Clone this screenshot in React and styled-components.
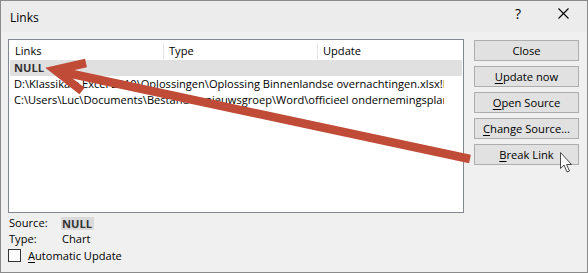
import React from "react";
import styled, { createGlobalStyle } from "styled-components";

const Global = createGlobalStyle`
  html, body { margin: 0; padding: 0; background: #f0f0f0; }
  * { box-sizing: border-box; }
`;

const Dialog = styled.div`
  position: relative;
  width: 588px;
  height: 273px;
  border: 1px solid #8a8a8a;
  background: #f0f0f0;
  display: flex;
  flex-direction: column;
  font-family: "Open Sans", "Noto Sans", sans-serif;
  font-size: 11.1px;
  color: #000;
  overflow: hidden;
`;

const TitleBar = styled.div`
  height: 31px;
  background: #ececec;
  display: flex;
  align-items: center;
  padding: 0 18px 0 9px;
  font-size: 12px;
`;

const Title = styled.div`
  flex: 1;
  margin-top: 1px;
`;

const HelpGlyph = styled.div`
  font-size: 14px;
  margin-top: -6px;
  margin-right: 37px;
`;

const CloseGlyph = styled.svg`
  margin-top: -6px;
  flex-shrink: 0;
`;

const Content = styled.div`
  display: flex;
  padding: 7px 0 0 7px;
`;

const LeftCol = styled.div`
  width: 456px;
  display: flex;
  flex-direction: column;
`;

const ListBox = styled.div`
  height: 174px;
  border: 1px solid #828790;
  background: #fff;
  padding: 0 1px;
`;

const Header = styled.div`
  display: flex;
  height: 20px;
  align-items: center;
  padding-top: 1px;
`;

const HeaderCell = styled.div`
  width: ${(p) => p.$w}px;
  padding-left: 5px;
  height: 16px;
  line-height: 16px;
  border-right: ${(p) => (p.$last ? "none" : "1px solid #e5e5e5")};
`;

const Row = styled.div`
  height: 16px;
  line-height: 16px;
  padding: 0 18px 0 4px;
  background: ${(p) => (p.$selected ? "#e0e0e0" : "transparent")};
  font-weight: ${(p) => (p.$bold ? 700 : 400)};
  color: ${(p) => (p.$bold ? "#333" : "#000")};
  white-space: nowrap;
  overflow: hidden;
`;

const RowText = styled.div`
  overflow: hidden;
  white-space: nowrap;
`;

const InfoRow = styled.div`
  display: flex;
  height: 16px;
  line-height: 16px;
  padding-left: 1px;
  margin-top: ${(p) => p.$mt || 0}px;
`;

const InfoLabel = styled.div`
  width: 53px;
`;

const Highlight = styled.span`
  background: #dadada;
  font-weight: 700;
  color: #333;
  padding: 0 2px 0 1px;
  margin-left: -1px;
  height: 13px;
  line-height: 13px;
  align-self: center;
  margin-top: 1px;
`;

const CheckRow = styled.label`
  display: flex;
  align-items: center;
  gap: 7px;
  margin-top: 2px;
  height: 13px;
`;

const CheckBox = styled.span`
  width: 13px;
  height: 13px;
  border: 1px solid #333;
  background: #fff;
`;

const U = styled.span`
  text-decoration: underline;
  text-underline-offset: 2px;
`;

const ButtonCol = styled.div`
  display: flex;
  flex-direction: column;
  gap: 5px;
  margin-left: 10px;
  margin-top: 1px;
`;

const Button = styled.div`
  width: 105px;
  height: 21px;
  border: 1px solid #adadad;
  background: #e1e1e1;
  display: flex;
  align-items: center;
  justify-content: center;
  font-size: 11.2px;
`;

const Overlay = styled.svg`
  position: absolute;
  left: -1px;
  top: -1px;
  pointer-events: none;
`;

export default function App() {
  return (
    <>
      <Global />
      <Dialog>
        <TitleBar>
          <Title>Links</Title>
          <HelpGlyph>?</HelpGlyph>
          <CloseGlyph width="11" height="11" viewBox="0 0 11 11">
            <path d="M0.5 0.5 L10.5 10.5 M10.5 0.5 L0.5 10.5" stroke="#000" strokeWidth="1.1" />
          </CloseGlyph>
        </TitleBar>
        <Content>
          <LeftCol>
            <ListBox>
              <Header>
                <HeaderCell $w={154}>Links</HeaderCell>
                <HeaderCell $w={154}>Type</HeaderCell>
                <HeaderCell $w={144} $last>Update</HeaderCell>
              </Header>
              <Row $selected $bold>NULL</Row>
              <Row>
                <RowText>D:\Klassikale Excel 2010\Oplossingen\Oplossing Binnenlandse overnachtingen.xlsx!Liggingen</RowText>
              </Row>
              <Row>
                <RowText>C:\Users\Luc\Documents\Bestanden nieuwsgroep\Word\officieel ondernemingsplan.docx</RowText>
              </Row>
            </ListBox>
            <InfoRow $mt={2}>
              <InfoLabel>Source:</InfoLabel>
              <Highlight>NULL</Highlight>
            </InfoRow>
            <InfoRow>
              <InfoLabel>Type:</InfoLabel>
              <span>Chart</span>
            </InfoRow>
            <CheckRow>
              <CheckBox />
              <span>
                <U>A</U>utomatic Update
              </span>
            </CheckRow>
          </LeftCol>
          <ButtonCol>
            <Button>Close</Button>
            <Button>
              <U>U</U>pdate now
            </Button>
            <Button>
              <U>O</U>pen Source
            </Button>
            <Button>
              <U>C</U>hange Source...
            </Button>
            <Button>
              <U>B</U>reak Link
            </Button>
          </ButtonCol>
        </Content>
        <Overlay width="588" height="273" viewBox="0 0 588 273">
          <line x1="470" y1="159" x2="58" y2="71" stroke="#c04b37" strokeWidth="8.5" />
          <polyline
            points="86,63 55,70 82,91"
            fill="none"
            stroke="#c04b37"
            strokeWidth="8.5"
            strokeLinejoin="miter"
            strokeMiterlimit="10"
          />
          <path
            d="M560.5 152.5 L560.5 168.5 L564 165 L567 172 L569.5 171 L566.5 164.5 L571.5 164.5 Z"
            fill="#fff"
            stroke="#4a4a4a"
            strokeWidth="1"
            strokeLinejoin="round"
          />
        </Overlay>
      </Dialog>
    </>
  );
}
